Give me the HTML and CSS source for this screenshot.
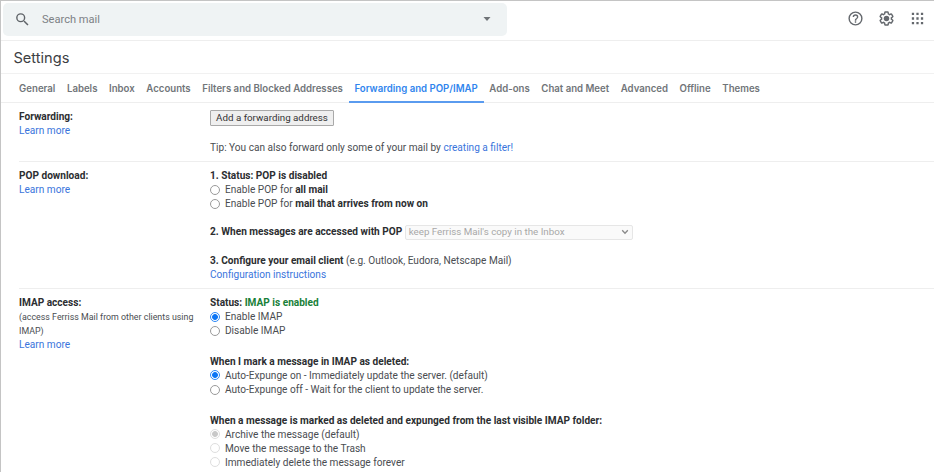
FILE: index.html
```
<!DOCTYPE html>
<html lang="en">
<head>
<meta charset="utf-8">
<title>Settings</title>
<link rel="stylesheet" href="styles.css">
</head>
<body>
<div class="app">
  <header class="topbar">
    <div class="search">
      <svg class="search-icon" viewBox="0 0 24 24"><path d="M15.5 14h-.79l-.28-.27A6.47 6.47 0 0 0 16 9.5 6.5 6.5 0 1 0 9.5 16c1.61 0 3.09-.59 4.23-1.57l.27.28v.79l5 4.99L20.49 19l-4.99-5zm-6 0a4.5 4.5 0 1 1 0-9 4.5 4.5 0 0 1 0 9z"/></svg>
      <span class="search-text">Search mail</span>
      <svg class="caret" viewBox="0 0 8 4"><path d="M0.5 0h7L4 4z"/></svg>
    </div>
    <div class="actions">
      <svg viewBox="0 0 24 24"><path d="M11 18h2v-2h-2v2zm1-16a10 10 0 1 0 0 20 10 10 0 0 0 0-20zm0 18a8 8 0 1 1 0-16 8 8 0 0 1 0 16zm0-14a4 4 0 0 0-4 4h2a2 2 0 1 1 4 0c0 2-3 1.750-3 5h2c0-2.250 3-2.500 3-5a4 4 0 0 0-4-4z"/></svg>
      <svg viewBox="0 0 24 24"><path d="M13.850 22.250h-3.700c-.74 0-1.360-.54-1.450-1.270l-.27-1.890c-.27-.14-.53-.29-.79-.46l-1.800.72c-.7.26-1.470-.03-1.810-.65L2.200 15.530c-.35-.66-.2-1.440.36-1.880l1.530-1.190c-.01-.15-.02-.3-.02-.46 0-.15.01-.31.02-.46l-1.520-1.190c-.59-.45-.74-1.260-.37-1.880l1.850-3.190c.34-.62 1.110-.9 1.790-.63l1.810.73c.26-.17.52-.32.78-.46l.27-1.910c.09-.7.71-1.250 1.440-1.250h3.700c.74 0 1.360.54 1.450 1.270l.27 1.890c.27.14.53.29.79.46l1.800-.72c.71-.26 1.480.03 1.820.65l1.840 3.180c.36.66.2 1.440-.36 1.880l-1.520 1.190c.01.15.02.3.02.46s-.01.31-.02.46l1.520 1.190c.56.45.72 1.230.37 1.860l-1.860 3.220c-.34.62-1.110.9-1.800.63l-1.800-.72c-.26.17-.52.32-.78.46l-.27 1.910c-.1.68-.72 1.220-1.460 1.220zm-3.230-2h2.760l.37-2.550.53-.22c.44-.18.88-.44 1.340-.78l.45-.34 2.380.96 1.380-2.400-2.030-1.580.07-.56c.03-.26.06-.51.06-.78s-.03-.53-.06-.78l-.07-.56 2.030-1.580-1.390-2.400-2.390.96-.45-.35c-.42-.32-.87-.58-1.330-.77l-.52-.22-.37-2.550h-2.760l-.37 2.550-.53.21c-.44.19-.88.44-1.340.79l-.45.33-2.380-.95-1.390 2.390 2.030 1.580-.07.56a7 7 0 0 0-.06.79c0 .26.02.53.06.78l.07.56-2.030 1.580 1.380 2.400 2.390-.96.45.35c.43.33.86.58 1.330.77l.53.22.38 2.550z"/><circle cx="12" cy="12" r="3.900"/></svg>
      <svg viewBox="0 0 24 24"><path d="M4 4h3.200v3.200H4zM10.400 4h3.200v3.200h-3.200zM16.800 4H20v3.200h-3.200zM4 10.400h3.200v3.200H4zM10.400 10.400h3.200v3.200h-3.200zM16.800 10.400H20v3.200h-3.200zM4 16.800h3.200V20H4zM10.400 16.800h3.200V20h-3.200zM16.800 16.800H20V20h-3.200z"/></svg>
    </div>
  </header>
  <h1 class="title">Settings</h1>
  <nav class="tabs">
    <span class="tab">General</span><span class="tab">Labels</span><span class="tab">Inbox</span><span class="tab">Accounts</span><span class="tab">Filters and Blocked Addresses</span><span class="tab active">Forwarding and POP/IMAP</span><span class="tab">Add-ons</span><span class="tab">Chat and Meet</span><span class="tab">Advanced</span><span class="tab">Offline</span><span class="tab">Themes</span>
  </nav>
  <main>
    <section class="row forwarding">
      <div class="label"><b>Forwarding:</b><br><a>Learn more</a></div>
      <div class="content">
        <button class="button">Add a forwarding address</button>
        <p class="tip">Tip: You can also forward only some of your mail by <a>creating a filter!</a></p>
      </div>
    </section>
    <section class="row pop">
      <div class="label"><b>POP download:</b><br><a>Learn more</a></div>
      <div class="content">
        <div class="group">
          <b>1. Status: POP is disabled</b>
          <div class="option"><i class="radio"></i><span>Enable POP for <b>all mail</b></span></div>
          <div class="option"><i class="radio"></i><span>Enable POP for <b>mail that arrives from now on</b></span></div>
        </div>
        <div class="group access"><b>2. When messages are accessed with POP</b>
          <div class="select"><span>keep Ferriss Mail's copy in the Inbox</span><svg viewBox="0 0 8 6"><path d="M1.200 1.200 4 4.200 6.800 1.200"/></svg></div>
        </div>
        <div class="group"><b>3. Configure your email client</b> (e.g. Outlook, Eudora, Netscape Mail)<br><a>Configuration instructions</a></div>
      </div>
    </section>
    <section class="row imap">
      <div class="label"><b>IMAP access:</b><div class="note">(access Ferriss Mail from other clients using IMAP)</div><a>Learn more</a></div>
      <div class="content">
        <div class="group">
          <b>Status: <span class="enabled">IMAP is enabled</span></b>
          <div class="option"><i class="radio checked"></i><span>Enable IMAP</span></div>
          <div class="option"><i class="radio"></i><span>Disable IMAP</span></div>
        </div>
        <div class="group">
          <b>When I mark a message in IMAP as deleted:</b>
          <div class="option"><i class="radio checked"></i><span>Auto-Expunge on - Immediately update the server. (default)</span></div>
          <div class="option"><i class="radio"></i><span>Auto-Expunge off - Wait for the client to update the server.</span></div>
        </div>
        <div class="group">
          <b>When a message is marked as deleted and expunged from the last visible IMAP folder:</b>
          <div class="option"><i class="radio checked disabled"></i><span>Archive the message (default)</span></div>
          <div class="option"><i class="radio disabled"></i><span>Move the message to the Trash</span></div>
          <div class="option"><i class="radio disabled"></i><span>Immediately delete the message forever</span></div>
        </div>
      </div>
    </section>
  </main>
</div>
</body>
</html>
```
FILE: styles.css
```
* { box-sizing: border-box; }
body { margin: 0; background: #fff; color: #4a4d51; font: 10.1px/14.1px Roboto, sans-serif; }
.app { height: 472px; overflow: hidden; border-top: 1px solid #c4c4c4; border-left: 1px solid #c4c4c4; }
b { color: #2c2e31; font-weight: 700; }
a { color: #3a75dc; }
.topbar { display: flex; height: 40px; padding: 2px 8.500px 4px 2px; border-bottom: 1px solid #eee; }
.search { display: flex; align-items: center; width: 504px; height: 33px; padding: 0 16px 0 11px; border-radius: 5px; background: #eff3f4; color: #7d8185; font-size: 11.1px; }
.search-icon { width: 17px; height: 17px; margin: -1px 11px 0 0; fill: #5f6368; }
.search-text { flex: 1; padding-top: 2px; }
.caret { width: 8px; height: 4px; margin-top: -1px; fill: #6f7377; }
.actions { display: flex; align-items: center; gap: 14px; height: 33px; margin: -1px 0 0 auto; }
.actions svg { width: 17px; height: 17px; fill: #64686d; }
.title { height: 33px; margin: 0; padding-left: 12.5px; border-bottom: 1px solid #f1f1f1; color: #3c4043; font: 400 14.6px/34px Inter, sans-serif; }
.tabs { display: flex; height: 29px; padding-left: 12.3px; border-bottom: 1px solid #eee; color: #717579; font: 600 9.65px/30px Inter, sans-serif; }
.tab { height: 29px; padding: 0 5.8px; white-space: nowrap; }
.active { border-bottom: 2px solid #5a9bef; color: #3085ee; }
.row { display: flex; margin-left: 18px; border-bottom: 1px solid #eee; }
.label { width: 191px; flex: none; }
.content { flex: 1; }
.forwarding { height: 59px; padding-top: 7px; }
.button { display: block; width: 124px; height: 16px; padding: 0; border: 1px solid #a9a9a9; border-radius: 1px; background: #efefef; color: #333; font: 9.78px/14px Roboto, sans-serif; }
.tip { margin: 14.5px 0 0; }
.pop { height: 127px; padding-top: 7px; }
.group { margin-bottom: 14.1px; }
.option { display: flex; align-items: center; height: 14.1px; }
.radio { width: 10px; height: 10px; margin: -1px 5px 0 0; border: 1px solid #9a9a9a; border-radius: 50%; background: #fff; }
.checked { border-color: #2a88f8; background: radial-gradient(circle, #0b75f5 2.500px, #fff 3.300px); }
.disabled { border-color: #dedede; }
.checked.disabled { background: radial-gradient(circle, #c8c8c8 2.500px, #fff 3.300px); }
.access { display: flex; align-items: center; height: 14.1px; }
.select { display: flex; align-items: center; justify-content: space-between; width: 228px; height: 15px; margin-left: 2.500px; padding: 0 3px; border: 1px solid #e6e6e6; border-radius: 2px; background: #fafafa; color: #a8a8a8; font-size: 9.78px; }
.select svg { width: 8px; height: 6px; fill: none; stroke: #8a8a8a; stroke-width: 1.300; }
.imap { padding-top: 7px; border: 0; }
.imap .group { margin-bottom: 16.5px; }
.note { width: 182px; font-size: 8.85px; }
.enabled { color: #188038; }
```
